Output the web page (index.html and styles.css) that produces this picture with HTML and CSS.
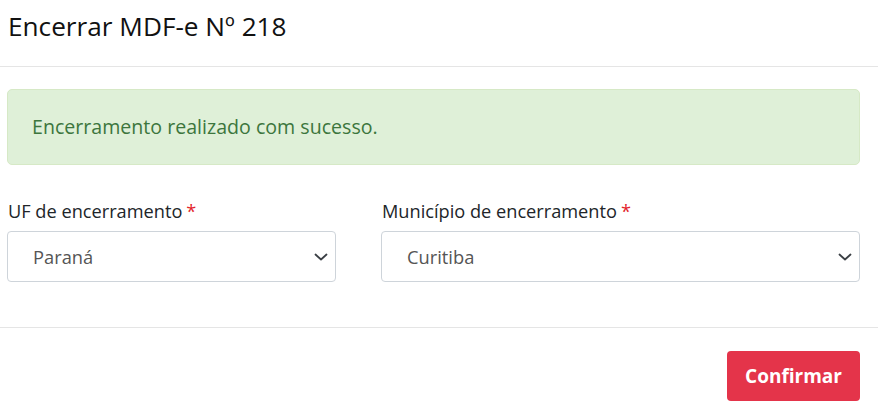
FILE: index.html
```html
<!DOCTYPE html>
<html lang="pt-BR">
<head>
<meta charset="utf-8">
<title>Encerrar MDF-e</title>
<link rel="stylesheet" href="styles.css">
</head>
<body>
<div class="modal">
  <header class="modal-header">
    <h1 class="modal-title">Encerrar MDF-e Nº 218</h1>
  </header>
  <main class="modal-body">
    <div class="alert">Encerramento realizado com sucesso.</div>
    <div class="form-row">
      <div class="field">
        <label class="label">UF de encerramento<span class="req">*</span></label>
        <div class="select">
          <span class="value">Paraná</span>
          <svg class="chev" width="14" height="8" viewBox="0 0 14 8"><path d="M1.5 1.5 L7 6.5 L12.5 1.5" fill="none" stroke="#3a3f44" stroke-width="1.8" stroke-linecap="round" stroke-linejoin="round"/></svg>
        </div>
      </div>
      <div class="field">
        <label class="label">Município de encerramento<span class="req">*</span></label>
        <div class="select">
          <span class="value">Curitiba</span>
          <svg class="chev" width="14" height="8" viewBox="0 0 14 8"><path d="M1.5 1.5 L7 6.5 L12.5 1.5" fill="none" stroke="#3a3f44" stroke-width="1.8" stroke-linecap="round" stroke-linejoin="round"/></svg>
        </div>
      </div>
    </div>
  </main>
  <footer class="modal-footer">
    <button class="btn-danger" type="button">Confirmar</button>
  </footer>
</div>
</body>
</html>
```

FILE: styles.css
```css
html, body {
  margin: 0;
  padding: 0;
  background: #fff;
  overflow: hidden;
}
body {
  font-family: "Open Sans", "Noto Sans", sans-serif;
  color: #212529;
}
.modal {
  width: 878px;
}
.modal-header {
  height: 67px;
  border-bottom: 1px solid #e5e5e5;
  padding: 0 8px 14px;
  display: flex;
  align-items: center;
  box-sizing: border-box;
}
.modal-title {
  margin: 0;
  font-size: 26.2px;
  font-weight: 400;
  color: #111;
  line-height: 1;
}
.modal-body {
  padding: 22px 18px 45px 7px;
}
.alert {
  height: 76px;
  box-sizing: border-box;
  background: #dff0d8;
  border: 1px solid #d6e9c6;
  border-radius: 5px;
  color: #3c763d;
  font-size: 19.6px;
  display: flex;
  align-items: center;
  padding: 0 24px 2px;
}
.form-row {
  display: grid;
  grid-template-columns: 329px 479px;
  column-gap: 45px;
  margin-top: 34px;
}
.label {
  display: block;
  font-size: 18.2px;
  line-height: 24px;
  padding-left: 1px;
  margin-bottom: 8px;
}
.req {
  color: #e3242b;
  margin-left: 4px;
}
.select {
  height: 51px;
  box-sizing: border-box;
  border: 1px solid #ced4da;
  border-radius: 4px;
  display: flex;
  align-items: center;
  justify-content: space-between;
  padding: 0 7px 0 25px;
  font-size: 18.3px;
  color: #555;
}
.modal-footer {
  border-top: 1px solid #e5e5e5;
  display: flex;
  justify-content: flex-end;
  padding: 23px 18px 0 0;
}
.btn-danger {
  width: 133px;
  height: 50px;
  border: none;
  border-radius: 4px;
  background: #e4344a;
  color: #fff;
  font-family: "Open Sans", "Noto Sans", sans-serif;
  font-size: 19px;
  font-weight: 700;
  padding: 0;
}
```
